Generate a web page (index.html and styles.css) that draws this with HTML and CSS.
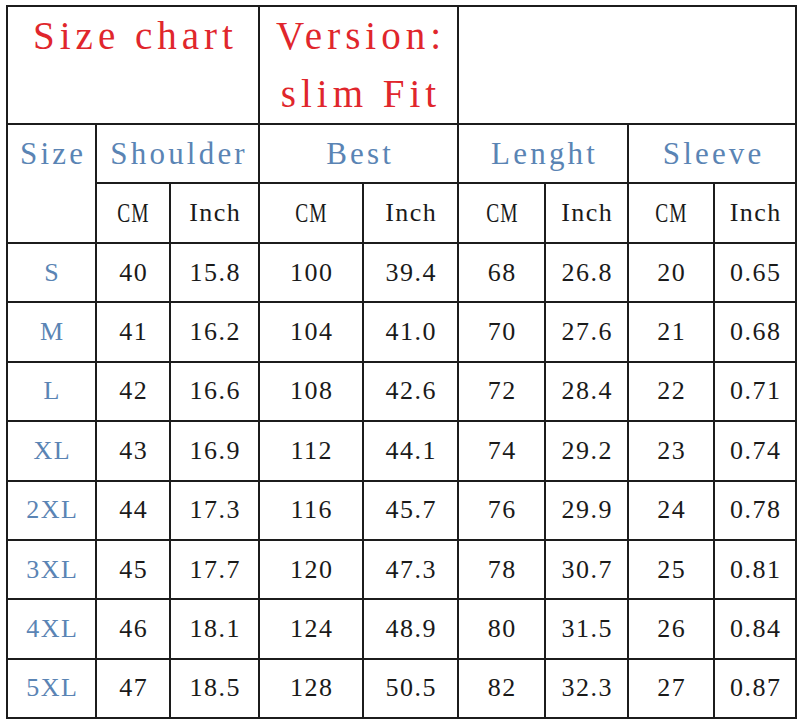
FILE: index.html
```html
<!DOCTYPE html>
<html>
<head>
<meta charset="utf-8">
<link rel="stylesheet" href="styles.css">
</head>
<body>
<div class="sheet">
<table class="chart">
<colgroup>
<col class="w89"><col class="w74"><col class="w89"><col class="w104"><col class="w95"><col class="w87"><col class="w83"><col class="w86"><col class="w82">
</colgroup>
<tr class="r-title">
<td colspan="3" class="title">Size chart</td>
<td colspan="2" class="title">Version:<br>slim Fit</td>
<td colspan="4"></td>
</tr>
<tr class="r-head">
<td rowspan="2" class="head">Size</td>
<td colspan="2" class="head">Shoulder</td>
<td colspan="2" class="head">Best</td>
<td colspan="2" class="head">Lenght</td>
<td colspan="2" class="head">Sleeve</td>
</tr>
<tr class="r-unit">
<td class="unit"><span class="cm">CM</span></td><td class="unit">Inch</td>
<td class="unit"><span class="cm">CM</span></td><td class="unit">Inch</td>
<td class="unit"><span class="cm">CM</span></td><td class="unit">Inch</td>
<td class="unit"><span class="cm">CM</span></td><td class="unit">Inch</td>
</tr>
<tr class="r-data"><td class="size">S</td><td>40</td><td>15.8</td><td>100</td><td>39.4</td><td>68</td><td>26.8</td><td>20</td><td>0.65</td></tr>
<tr class="r-data"><td class="size">M</td><td>41</td><td>16.2</td><td>104</td><td>41.0</td><td>70</td><td>27.6</td><td>21</td><td>0.68</td></tr>
<tr class="r-data"><td class="size">L</td><td>42</td><td>16.6</td><td>108</td><td>42.6</td><td>72</td><td>28.4</td><td>22</td><td>0.71</td></tr>
<tr class="r-data"><td class="size">XL</td><td>43</td><td>16.9</td><td>112</td><td>44.1</td><td>74</td><td>29.2</td><td>23</td><td>0.74</td></tr>
<tr class="r-data"><td class="size">2XL</td><td>44</td><td>17.3</td><td>116</td><td>45.7</td><td>76</td><td>29.9</td><td>24</td><td>0.78</td></tr>
<tr class="r-data"><td class="size">3XL</td><td>45</td><td>17.7</td><td>120</td><td>47.3</td><td>78</td><td>30.7</td><td>25</td><td>0.81</td></tr>
<tr class="r-data"><td class="size">4XL</td><td>46</td><td>18.1</td><td>124</td><td>48.9</td><td>80</td><td>31.5</td><td>26</td><td>0.84</td></tr>
<tr class="r-data"><td class="size">5XL</td><td>47</td><td>18.5</td><td>128</td><td>50.5</td><td>82</td><td>32.3</td><td>27</td><td>0.87</td></tr>
</table>
</div>
</body>
</html>
```

FILE: styles.css
```css
html, body {
  margin: 0;
  background: #ffffff;
}
.sheet {
  padding: 5px 0 0 6px;
}
.chart {
  border-collapse: collapse;
  table-layout: fixed;
  width: 789px;
  font-family: "Liberation Serif", "Times New Roman", serif;
  color: #1a1a1a;
}
.w89 { width: 89px; }
.w74 { width: 74px; }
.w104 { width: 104px; }
.w95 { width: 95px; }
.w87 { width: 87px; }
.w83 { width: 83px; }
.w86 { width: 86px; }
.w82 { width: 82px; }
.chart td {
  border: 2px solid #1c1c1c;
  padding: 0;
  text-align: center;
  vertical-align: middle;
  font-size: 26px;
  letter-spacing: 1.5px;
  padding-left: 1.5px;
}
.r-title { height: 117px; }
.r-head { height: 57px; }
.r-unit { height: 60px; }
.r-data { height: 59.4px; }
.chart td.title {
  vertical-align: top;
  color: #e0262c;
  font-size: 39px;
  line-height: 58px;
  letter-spacing: 5px;
  padding-left: 5px;
}
.chart td.head {
  vertical-align: top;
  color: #5a84b4;
  font-size: 31px;
  line-height: 57px;
  letter-spacing: 3.2px;
  padding-left: 3.2px;
}
.chart td.size {
  color: #5a84b4;
}
.cm {
  display: inline-block;
  font-size: 27px;
  transform: scaleX(0.72);
}
```
